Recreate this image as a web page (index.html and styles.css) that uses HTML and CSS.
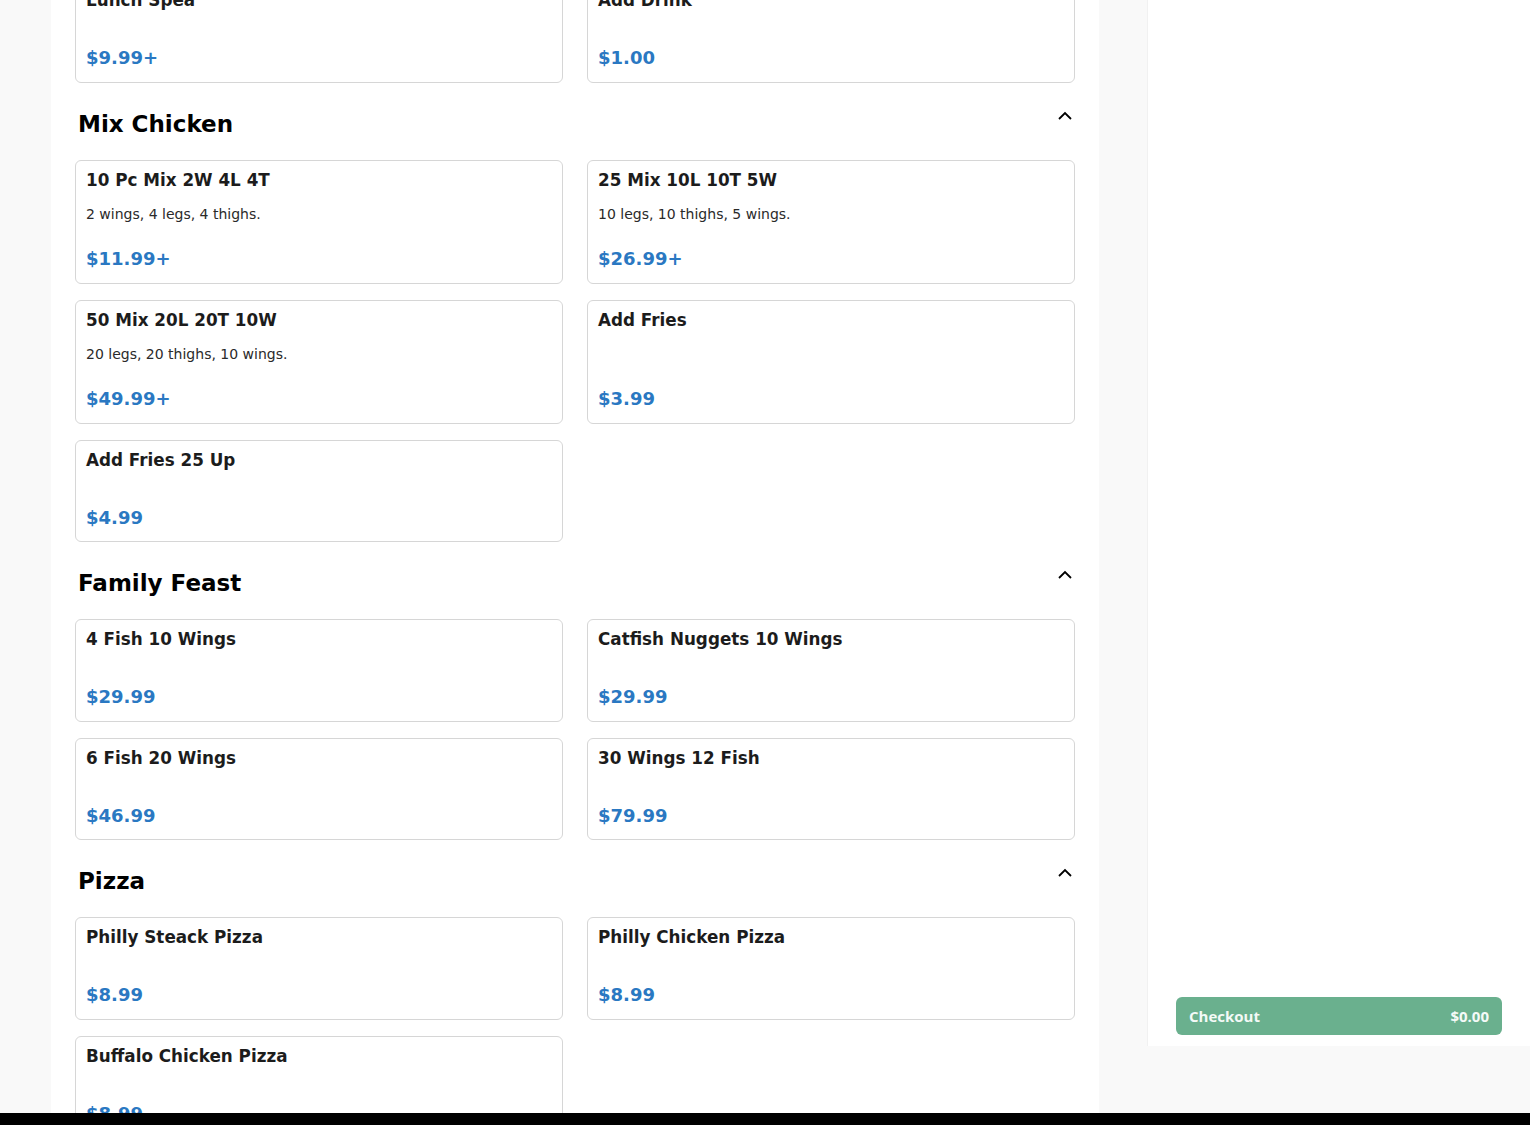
FILE: index.html
```html
<!DOCTYPE html>
<html lang="en">
  <head>
    <meta charset="UTF-8" />
    <meta name="viewport" content="width=device-width, initial-scale=1.0" />
    <title>Menu</title>

    <link rel="stylesheet" href="styles.css">
  </head>
  <body>
    <div class="page">
      <div class="menu">
        <div class="menu_inner">
          <div class="grid">
            <div class="card">
              <h3>Lunch Spea</h3>
              <p class="desc"></p>
              <div class="price">$9.99+</div>
            </div>
            <div class="card">
              <h3>Add Drink</h3>
              <p class="desc"></p>
              <div class="price">$1.00</div>
            </div>
          </div>

          <section class="category">
            <div class="category_head">
              <h2>Mix Chicken</h2>
              <svg viewBox="0 0 16 16"><path d="M2 9L8 3l6 6" /></svg>
            </div>
            <div class="grid">
              <div class="card">
                <h3>10 Pc Mix 2W 4L 4T</h3>
                <p class="desc">2 wings, 4 legs, 4 thighs.</p>
                <div class="price">$11.99+</div>
              </div>
              <div class="card">
                <h3>25 Mix 10L 10T 5W</h3>
                <p class="desc">10 legs, 10 thighs, 5 wings.</p>
                <div class="price">$26.99+</div>
              </div>
              <div class="card">
                <h3>50 Mix 20L 20T 10W</h3>
                <p class="desc">20 legs, 20 thighs, 10 wings.</p>
                <div class="price">$49.99+</div>
              </div>
              <div class="card">
                <h3>Add Fries</h3>
                <p class="desc"></p>
                <div class="price">$3.99</div>
              </div>
              <div class="card">
                <h3>Add Fries 25 Up</h3>
                <p class="desc"></p>
                <div class="price">$4.99</div>
              </div>
            </div>
          </section>

          <section class="category">
            <div class="category_head">
              <h2>Family Feast</h2>
              <svg viewBox="0 0 16 16"><path d="M2 9L8 3l6 6" /></svg>
            </div>
            <div class="grid">
              <div class="card">
                <h3>4 Fish 10 Wings</h3>
                <p class="desc"></p>
                <div class="price">$29.99</div>
              </div>
              <div class="card">
                <h3>Catfish Nuggets 10 Wings</h3>
                <p class="desc"></p>
                <div class="price">$29.99</div>
              </div>
              <div class="card">
                <h3>6 Fish 20 Wings</h3>
                <p class="desc"></p>
                <div class="price">$46.99</div>
              </div>
              <div class="card">
                <h3>30 Wings 12 Fish</h3>
                <p class="desc"></p>
                <div class="price">$79.99</div>
              </div>
            </div>
          </section>

          <section class="category">
            <div class="category_head">
              <h2>Pizza</h2>
              <svg viewBox="0 0 16 16"><path d="M2 9L8 3l6 6" /></svg>
            </div>
            <div class="grid">
              <div class="card">
                <h3>Philly Steack Pizza</h3>
                <p class="desc"></p>
                <div class="price">$8.99</div>
              </div>
              <div class="card">
                <h3>Philly Chicken Pizza</h3>
                <p class="desc"></p>
                <div class="price">$8.99</div>
              </div>
              <div class="card">
                <h3>Buffalo Chicken Pizza</h3>
                <p class="desc"></p>
                <div class="price">$8.99</div>
              </div>
            </div>
          </section>
        </div>
      </div>

      <aside class="cart">
        <button class="checkout">
          <span>Checkout</span>
          <span>$0.00</span>
        </button>
      </aside>
    </div>
    <div class="bottom_bar"></div>
  </body>
</html>
```

FILE: styles.css
```css
* {
  box-sizing: border-box;
  padding: 0;
  margin: 0;
}
html,
body {
  height: 100%;
}
body {
  background: #f9f9f9;
  font-family: "DejaVu Sans", sans-serif;
  overflow: hidden;
}
.page {
  display: flex;
  align-items: flex-start;
  gap: 48px;
  height: 100vh;
  padding-left: 51px;
}
.menu {
  width: 1048px;
  height: 100%;
  background: #fff;
  padding: 0 24px;
  overflow: hidden;
}
.menu_inner {
  margin-top: -20px;
}
.category_head {
  display: flex;
  justify-content: space-between;
  align-items: flex-start;
  margin: 27px 0 22px;
  padding: 0 2px 0 3px;
}
.category_head h2 {
  font-size: 23px;
  line-height: 28px;
  font-weight: 700;
  color: #000;
}
.category_head svg {
  width: 16px;
  height: 16px;
  fill: none;
  stroke: #000;
  stroke-width: 1.8;
}
.grid {
  display: grid;
  grid-template-columns: 1fr 1fr;
  column-gap: 24px;
  row-gap: 16px;
}
.card {
  display: flex;
  flex-direction: column;
  border: 1px solid #d6d6d6;
  border-radius: 6px;
  padding: 8px 10px 12.5px;
}
.card h3 {
  font-size: 16.8px;
  line-height: 22px;
  font-weight: 700;
  color: #1c1c1c;
}
.card .desc {
  flex-grow: 1;
  margin-top: 13px;
  font-size: 14px;
  line-height: 21.5px;
  color: #2a2a2a;
}
.card .price {
  margin-top: 23px;
  font-size: 18px;
  line-height: 22px;
  font-weight: 700;
  color: #2a78c2;
}
.cart {
  width: 383px;
  height: 1046px;
  background: #fff;
  border-left: 1px solid #f1f1f1;
  display: flex;
  flex-direction: column;
  justify-content: flex-end;
  padding: 0 28px 11px;
}
.checkout {
  display: flex;
  justify-content: space-between;
  align-items: center;
  height: 38px;
  padding: 0 13px;
  border: none;
  border-radius: 6px;
  background: #6ab08e;
  color: #f4faf7;
  font-family: "Open Sans", sans-serif;
  font-size: 15px;
  font-weight: 700;
}
.bottom_bar {
  position: fixed;
  left: 0;
  right: 0;
  bottom: 0;
  height: 12px;
  background: #000;
}
```
